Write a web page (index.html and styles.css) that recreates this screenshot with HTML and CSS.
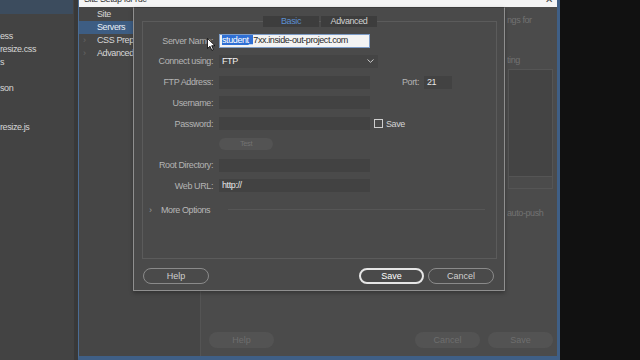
FILE: index.html
```html
<!DOCTYPE html>
<html lang="en">
<head>
<meta charset="UTF-8" />
<meta name="viewport" content="width=device-width, initial-scale=1" />
<title>Site Setup - Servers</title>
<link rel="stylesheet" href="styles.css">
</head>
<body>

  <div class="screen">
    <aside class="files">
      <div class="files-head"></div>
      <ul class="file-list">
        <li>ess</li>
        <li>resize.css</li>
        <li>s</li>
        <li></li>
        <li>son</li>
        <li></li>
        <li></li>
        <li>resize.js</li>
      </ul>
    </aside>

    <div class="site-setup">
      <div class="titlebar">
        <span class="title">Site Setup for ruc</span>
        <span class="close">✕</span>
      </div>
      <div class="setup-body">
        <nav class="setup-nav">
          <div class="nav-item">Site</div>
          <div class="nav-item active">Servers</div>
          <div class="nav-item"><i>›</i>CSS Preprocessors</div>
          <div class="nav-item"><i>›</i>Advanced Settings</div>
        </nav>
        <div class="setup-gap"></div>
        <main class="setup-main">
          <div class="setup-top">
            <div class="setup-side">
              <div class="faint">ngs for</div>
              <div class="faint side-gap">ting</div>
              <div class="side-box"></div>
              <div class="side-row"></div>
              <div class="faint">auto-push</div>
            </div>
          </div>
          <div class="setup-foot">
            <button class="ghost">Help</button>
            <span class="spacer"></span>
            <button class="ghost">Cancel</button>
            <button class="ghost">Save</button>
          </div>
        </main>
      </div>
    </div>

    <div class="void"></div>
  </div>

  <!-- server dialog sits on top of the site setup window -->
  <div class="server-dialog">
    <div class="panel">
      <div class="tabs">
        <span class="tab active">Basic</span>
        <span class="tab">Advanced</span>
      </div>

      <div class="form">
        <div class="row">
          <label>Server Name:</label>
          <div class="field light"><span class="sel">student_</span>7xx.inside-out-project.com</div>
          <svg class="pointer" width="9" height="13" viewBox="0 0 9 13">
            <path d="M0.5 0.5 L0.5 10.5 L3 8.2 L4.8 12.3 L6.4 11.6 L4.7 7.7 L8 7.7 Z" fill="#fff" stroke="#000" stroke-width="0.8"/>
          </svg>
        </div>
        <div class="row">
          <label>Connect using:</label>
          <div class="field select">FTP
            <svg class="chev" width="7" height="4" viewBox="0 0 7 4"><path d="M0.5 0.5 L3.5 3.3 L6.5 0.5" fill="none" stroke="#ccc" stroke-width="1"/></svg>
          </div>
        </div>
        <div class="row">
          <label>FTP Address:</label>
          <div class="field"></div>
          <label class="port-label">Port:</label>
          <div class="field port">21</div>
        </div>
        <div class="row">
          <label>Username:</label>
          <div class="field"></div>
        </div>
        <div class="row">
          <label>Password:</label>
          <div class="field"></div>
          <span class="check"></span>
          <span class="check-label">Save</span>
        </div>
        <div class="row">
          <label></label>
          <div class="test-btn">Test</div>
        </div>
        <div class="row">
          <label>Root Directory:</label>
          <div class="field"></div>
        </div>
        <div class="row">
          <label>Web URL:</label>
          <div class="field">http://</div>
        </div>
      </div>

      <div class="more">
        <span class="more-chev">›</span>
        <span class="more-text">More Options</span>
        <span class="more-line"></span>
      </div>
    </div>

    <div class="dialog-foot">
      <button class="pill">Help</button>
      <span class="spacer"></span>
      <button class="pill primary">Save</button>
      <button class="pill">Cancel</button>
    </div>
  </div>

</body>
</html>
```

FILE: styles.css
```css
* { box-sizing: border-box; }

body {
  margin: 0;
  width: 640px;
  height: 360px;
  overflow: hidden;
  background: #111;
  font-family: 'Liberation Sans', Arial, sans-serif;
  font-size: 9px;
  letter-spacing: -0.4px;
  color: #c8c8c8;
}

.screen {
  display: flex;
  height: 360px;
}

/* Panneau des fichiers à gauche */
.files {
  width: 78px;
  background: #434343;
  border-right: 4px solid #393939;
}
.files-head {
  height: 14px;
  background: #3c4c5e;
  margin-right: 1px;
}
.file-list {
  list-style: none;
  margin: 16px 0 0;
  padding: 0;
}
.file-list li {
  height: 13px;
  line-height: 13px;
  color: #d6d6d6;
  white-space: nowrap;
}

/* Fenêtre Site Setup (arrière-plan) */
.site-setup {
  width: 482px;
  display: flex;
  flex-direction: column;
  border-left: 1px solid #4b6d95;
  border-right: 3px solid #3f5f86;
  border-bottom: 4px solid #3f5f86;
  background: #464646;
}
.titlebar {
  height: 7px;
  background: #f4f4f4;
  display: flex;
  justify-content: space-between;
  overflow: hidden;
  padding: 0 4px 0 5px;
}
.titlebar .title {
  margin-top: -6px;
  color: #333;
}
.titlebar .close {
  margin-top: -6px;
  color: #444;
  font-size: 10px;
}

.setup-body {
  flex: 1;
  display: flex;
}
.setup-nav {
  width: 54px;
  padding-top: 1px;
  overflow: hidden;
}
.nav-item {
  height: 13px;
  line-height: 13px;
  padding-left: 18px;
  white-space: nowrap;
  color: #d8d8d8;
  position: relative;
}
.nav-item.active {
  background: #3d5d83;
  color: #e8eef6;
}
.nav-item i {
  position: absolute;
  left: 4px;
  font-style: normal;
  color: #666;
}

.setup-gap {
  width: 67px;
}
.setup-main {
  flex: 1;
  display: flex;
  flex-direction: column;
  background: #4b4b4b;
  border-left: 1px solid #545454;
}
.setup-top {
  flex: 1;
  display: flex;
  justify-content: flex-end;
}
.setup-side {
  width: 50px;
  padding-top: 7px;
  overflow: hidden;
}
.faint {
  color: #727272;
  height: 13px;
  line-height: 13px;
  white-space: nowrap;
}
.side-gap { margin-top: 27px; }
.side-box {
  height: 108px;
  margin: 2px 4px 0 1px;
  background: #444;
  border: 1px solid #555;
}
.side-row {
  height: 12px;
  margin: 0 4px 18px 1px;
  border: 1px solid #555;
  border-top: 0;
}
.setup-foot {
  display: flex;
  gap: 8px;
  padding: 0 4px 8px 8px;
}
.setup-foot .spacer { flex: 1; }
.ghost {
  width: 65px;
  height: 16px;
  border: 0;
  border-radius: 8px;
  background: #535353;
  color: #6e6e6e;
  font: inherit;
  padding: 0;
}

.void {
  flex: 1;
  background: #111;
}

/* Dialogue serveur (au premier plan) */
.server-dialog {
  position: absolute;
  left: 133px;
  top: 7px;
  width: 372px;
  height: 284px;
  background: #4a4a4a;
  border: 1px solid #8f8f8f;
  border-top-color: #3b3b3b;
  padding: 13px 7px 0 8px;
  display: flex;
  flex-direction: column;
  box-shadow: 0 2px 4px rgba(0,0,0,0.3);
}

.panel {
  height: 238px;
  border: 1px solid #5b5b5b;
  display: flex;
  flex-direction: column;
}

.tabs {
  display: flex;
  gap: 2px;
  margin: -6px auto 0;
  padding-left: 1px;
}
.tab {
  height: 11px;
  line-height: 11px;
  width: 56px;
  background: #3d3d3d;
  text-align: center;
  color: #d0d0d0;
}
.tab.active { color: #5b8fd2; }

.form {
  display: flex;
  flex-direction: column;
  gap: 7.75px;
  margin-top: 7px;
}
.row {
  display: flex;
  align-items: center;
  height: 13px;
  position: relative;
}
.row label {
  width: 70px;
  text-align: right;
  color: #b4b4b4;
  margin-right: 6px;
  white-space: nowrap;
}
.field {
  width: 151px;
  height: 13px;
  line-height: 13px;
  background: #424242;
  color: #e6e6e6;
  padding-left: 3px;
  white-space: nowrap;
  overflow: hidden;
}
.field.light {
  background: #f3f3f3;
  color: #2a2a2a;
  border: 1px solid #7d9cc6;
  line-height: 11px;
  padding-left: 2px;
  height: 14px;
}
.sel {
  background: #2f6fd4;
  color: #fff;
}
.pointer {
  position: absolute;
  left: 64px;
  top: 4px;
}
.field.select {
  width: 159px;
  background: #444;
  display: flex;
  justify-content: space-between;
  align-items: center;
  padding-right: 4px;
  color: #f0f0f0;
}
.port-label.port-label {
  width: auto;
  margin: 0 5px 0 32px;
}
.field.port {
  width: 28px;
}
.check {
  width: 9px;
  height: 9px;
  border: 1px solid #cfcfcf;
  margin-left: 4px;
}
.check-label {
  margin-left: 3px;
  color: #d4d4d4;
}
.test-btn {
  width: 54px;
  height: 12px;
  line-height: 12px;
  border-radius: 6px;
  background: #535353;
  color: #727272;
  text-align: center;
  font-size: 7.5px;
}

.more {
  display: flex;
  align-items: center;
  margin-top: 12px;
  height: 11px;
  padding-left: 6px;
}
.more-chev {
  color: #999;
  width: 12px;
}
.more-text {
  color: #b8b8b8;
}
.more-line {
  flex: 1;
  height: 1px;
  background: #565656;
  margin: 0 11px 0 18px;
}

.dialog-foot {
  display: flex;
  gap: 4px;
  margin-top: 9px;
  padding: 0 3px 0 1px;
}
.dialog-foot .spacer { flex: 1; }
.pill {
  width: 66px;
  height: 16px;
  border: 1px solid #8a8a8a;
  border-radius: 8px;
  background: transparent;
  color: #cfcfcf;
  font: inherit;
  padding: 0;
}
.pill.primary {
  border: 2px solid #e6e6e6;
  color: #fff;
  width: 65px;
}
```
